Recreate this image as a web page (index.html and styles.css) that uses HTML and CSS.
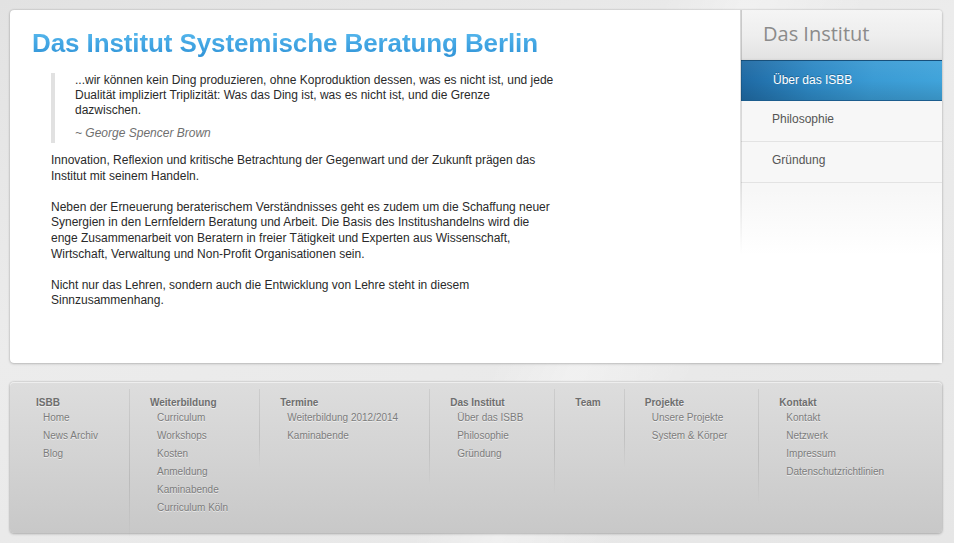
FILE: index.html
```html
<!DOCTYPE html>
<html lang="de">
<head>
<meta charset="utf-8">
<title>ISBB – Über das ISBB</title>
<link rel="stylesheet" href="styles.css">
</head>
<body>
<div class="page">
  <div class="card">
    <main class="content">
      <h1 class="title">Das Institut Systemische Beratung Berlin</h1>
      <div class="text">
        <blockquote class="quote">
          <p>...wir können kein Ding produzieren, ohne Koproduktion dessen, was es nicht ist, und jede Dualität impliziert Triplizität: Was das Ding ist, was es nicht ist, und die Grenze dazwischen.</p>
          <cite>~ George Spencer Brown</cite>
        </blockquote>
        <p>Innovation, Reflexion und kritische Betrachtung der Gegenwart und der Zukunft prägen das Institut mit seinem Handeln.</p>
        <p>Neben der Erneuerung beraterischem Verständnisses geht es zudem um die Schaffung neuer Synergien in den Lernfeldern Beratung und Arbeit. Die Basis des Institushandelns wird die enge Zusammenarbeit von Beratern in freier Tätigkeit und Experten aus Wissenschaft, Wirtschaft, Verwaltung und Non-Profit Organisationen sein.</p>
        <p>Nicht nur das Lehren, sondern auch die Entwicklung von Lehre steht in diesem Sinnzusammenhang.</p>
      </div>
    </main>
    <aside class="sidebar">
      <h2 class="side-title">Das Institut</h2>
      <ul class="side-nav">
        <li class="side-item active">Über das ISBB</li>
        <li class="side-item">Philosophie</li>
        <li class="side-item">Gründung</li>
      </ul>
    </aside>
  </div>
  <footer class="footer">
    <div class="col first">
      <div class="col-head">ISBB</div>
      <ul class="col-links"><li>Home</li><li>News Archiv</li><li>Blog</li></ul>
    </div>
    <div class="col">
      <div class="col-head">Weiterbildung</div>
      <ul class="col-links"><li>Curriculum</li><li>Workshops</li><li>Kosten</li><li>Anmeldung</li><li>Kaminabende</li><li>Curriculum Köln</li></ul>
    </div>
    <div class="col">
      <div class="col-head">Termine</div>
      <ul class="col-links"><li>Weiterbildung 2012/2014</li><li>Kaminabende</li></ul>
    </div>
    <div class="col">
      <div class="col-head">Das Institut</div>
      <ul class="col-links"><li>Über das ISBB</li><li>Philosophie</li><li>Gründung</li></ul>
    </div>
    <div class="col short">
      <div class="col-head">Team</div>
    </div>
    <div class="col">
      <div class="col-head">Projekte</div>
      <ul class="col-links"><li>Unsere Projekte</li><li>System &amp; Körper</li></ul>
    </div>
    <div class="col">
      <div class="col-head">Kontakt</div>
      <ul class="col-links"><li>Kontakt</li><li>Netzwerk</li><li>Impressum</li><li>Datenschutzrichtlinien</li></ul>
    </div>
  </footer>
</div>
</body>
</html>
```

FILE: styles.css
```css
* { box-sizing: border-box; }

html, body {
  margin: 0;
  padding: 0;
}

body {
  font-family: "Liberation Sans", Arial, Helvetica, sans-serif;
  color: #333;
  background:
    linear-gradient(115deg, rgba(255,255,255,0) 55%, rgba(255,255,255,0.35) 62%, rgba(255,255,255,0) 72%),
    linear-gradient(160deg, #e2e2e2 0%, #ececec 40%, #e6e6e6 100%);
  min-height: 543px;
}

.page {
  padding: 10px 12px 10px 10px;
}

/* main card */
.card {
  display: flex;
  height: 353px;
  background: #fff;
  border-radius: 4px;
  box-shadow: 0 0 2px rgba(0,0,0,0.25), 0 1px 3px rgba(0,0,0,0.15);
}

.content {
  flex: 1;
  padding: 18px 0 0 22px;
}

.title {
  margin: 0;
  font-size: 26px;
  line-height: 30px;
  font-weight: bold;
  letter-spacing: -0.1px;
  background: linear-gradient(to bottom, #5cbcef 0%, #44a7e4 50%, #2f92d6 100%);
  -webkit-background-clip: text;
  background-clip: text;
  color: transparent;
}

.text {
  margin: 15px 0 0 19px;
  width: 505px;
  font-size: 12px;
  line-height: 15.6px;
  color: #2a2a2a;
}

.text p {
  margin: 0 0 15.6px;
}

.quote {
  margin: 0 0 10px;
  padding: 0 0 2px 20px;
  border-left: 4px solid #e1e1e1;
  line-height: 15px;
}

.quote p {
  margin: 0 0 7px;
}

.quote cite {
  display: block;
  font-style: italic;
  color: #6f6f6f;
  line-height: 16px;
}

/* sidebar */
.sidebar {
  width: 201px;
  position: relative;
  border-radius: 0 4px 0 0;
  background: linear-gradient(to bottom, #f7f7f7 0px, #f7f7f7 180px, #ffffff 245px);
}

.sidebar::before {
  content: "";
  position: absolute;
  left: -1px;
  top: 0;
  width: 2px;
  height: 245px;
  background: linear-gradient(to bottom, rgba(0,0,0,0.16) 0%, rgba(0,0,0,0.1) 70%, rgba(0,0,0,0) 100%);
}

.side-title {
  margin: 0;
  height: 50px;
  padding-left: 22px;
  font-family: "Open Sans", "Liberation Sans", sans-serif;
  font-weight: normal;
  font-size: 20px;
  line-height: 48px;
  color: #8b8b8b;
  border-radius: 0 4px 0 0;
  background: linear-gradient(to bottom, #f5f5f5 0%, #eeeeee 50%, #e2e2e2 100%);
  box-shadow: inset 0 -1px 2px rgba(0,0,0,0.05);
}

.side-nav {
  list-style: none;
  margin: 0;
  padding: 0;
}

.side-item {
  height: 41px;
  padding-left: 31px;
  font-size: 12px;
  line-height: 36px;
  color: #555;
  border-bottom: 1px solid #e3e3e3;
}

.side-item.active {
  padding-left: 32px;
  color: #fff;
  line-height: 39px;
  border-top: 1px solid #174f7a;
  border-bottom: 1px solid #1c5d8e;
  background:
    linear-gradient(to bottom, rgba(255,255,255,0.06) 0%, rgba(0,0,0,0) 50%, rgba(0,0,0,0.12) 100%),
    linear-gradient(100deg, #1e68a2 0%, #2d88c4 35%, #3a9bd4 65%, #40a4db 100%);
  text-shadow: 0 -1px 0 rgba(0,0,0,0.25);
}

/* footer */
.footer {
  display: flex;
  align-items: flex-start;
  margin-top: 19px;
  height: 151px;
  padding: 7px 0 0 6px;
  border-radius: 4px;
  background: linear-gradient(to bottom, #dddddd 0%, #d3d3d3 50%, #c8c8c8 100%);
  box-shadow: 0 0 2px rgba(0,0,0,0.25), 0 1px 3px rgba(0,0,0,0.2), inset 0 1px 0 rgba(255,255,255,0.5);
}

.col {
  padding: 7px 23px 22px 20px;
  border-left: 1px solid transparent;
  border-image: linear-gradient(to bottom, rgba(0,0,0,0.07), rgba(0,0,0,0.1) 60%, rgba(0,0,0,0)) 1;
  text-shadow: 0 1px 0 rgba(255,255,255,0.6);
}

.col.first {
  border-left: 0;
}

.col.short {
  padding-bottom: 84px;
}

.col-head {
  font-size: 10px;
  line-height: 13px;
  font-weight: bold;
  color: #6e6e6e;
}

.col-links {
  list-style: none;
  margin: 0;
  padding: 0 0 0 7px;
}

.col-links li {
  font-size: 10px;
  line-height: 18px;
  padding-right: 8px;
  color: #7c7c7c;
  white-space: nowrap;
}
```
